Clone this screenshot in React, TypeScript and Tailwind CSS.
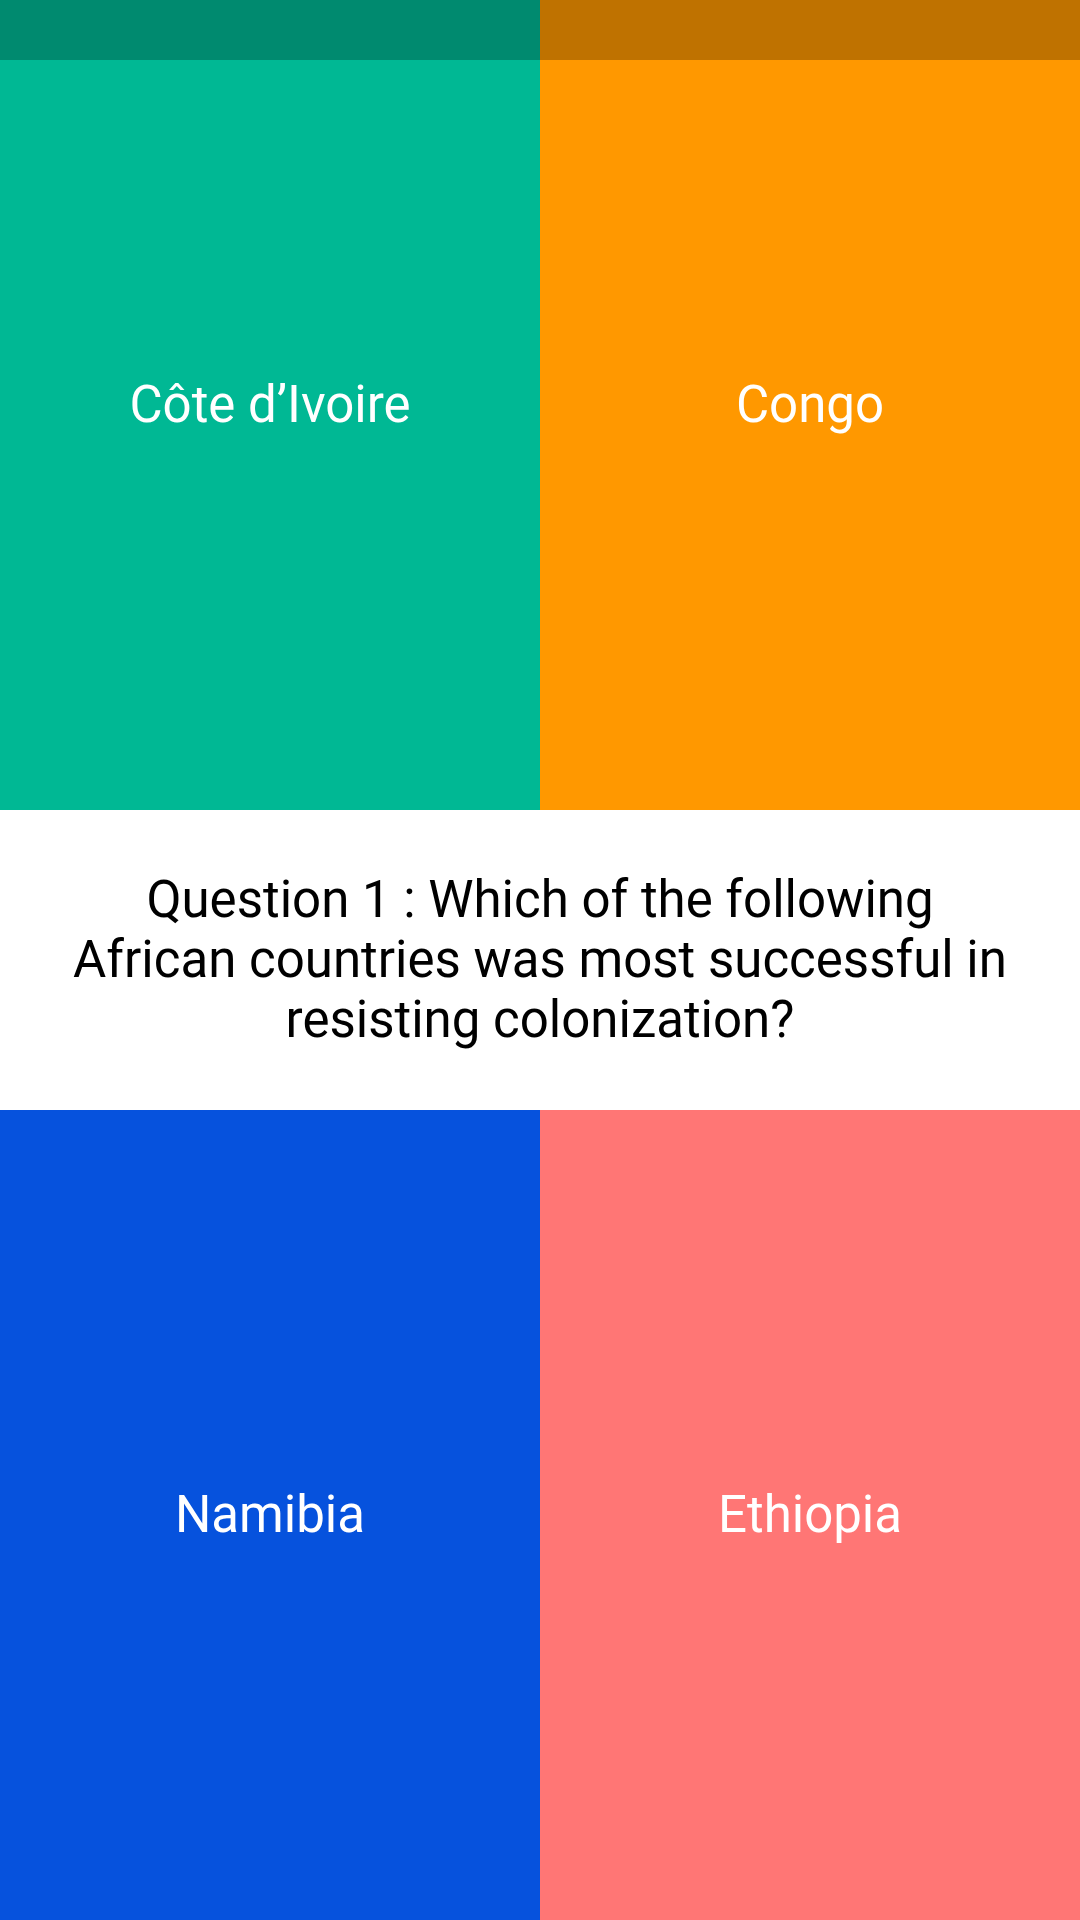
import React from 'react'

const answers = {
  top: [
    { label: 'Côte d’Ivoire', bg: 'bg-[#00b894]' },
    { label: 'Congo', bg: 'bg-[#ff9800]' },
  ],
  bottom: [
    { label: 'Namibia', bg: 'bg-[#0652dd]' },
    { label: 'Ethiopia', bg: 'bg-[#ff7675]' },
  ],
}

const AnswerTile = ({ label, bg }: { label: string; bg: string }) => (
  <button className={`${bg} flex-1 h-full flex items-center justify-center text-white text-[51px] leading-[1.172]`}>
    {label}
  </button>
)

export default function App() {
  return (
    <div
      className="relative w-[1080px] h-[1920px] flex flex-col bg-white overflow-hidden"
      style={{ fontFamily: 'Roboto, "Noto Sans", sans-serif' }}
    >
      {/* status bar tint over the top tiles */}
      <div className="absolute top-0 left-0 right-0 h-[60px] bg-black/25 pointer-events-none" />

      <div className="flex h-[810px]">
        {answers.top.map((a) => (
          <AnswerTile key={a.label} label={a.label} bg={a.bg} />
        ))}
      </div>

      <div className="h-[300px] flex items-center justify-center px-[60px]">
        <p className="text-center text-black text-[51px] leading-[1.172]">
          Question 1 : Which of the following African countries was most successful in resisting colonization?
        </p>
      </div>

      <div className="flex h-[810px]">
        {answers.bottom.map((a) => (
          <AnswerTile key={a.label} label={a.label} bg={a.bg} />
        ))}
      </div>
    </div>
  )
}
